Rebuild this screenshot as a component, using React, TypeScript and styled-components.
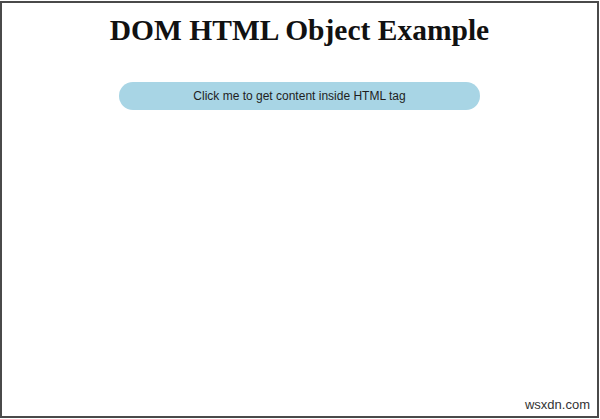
import React from "react";
import styled, { createGlobalStyle } from "styled-components";

const Global = createGlobalStyle`
  html, body { margin: 0; padding: 0; background: #fff; }
  body { width: 600px; height: 419px; overflow: hidden; }
`;

const Frame = styled.div`
  box-sizing: border-box;
  margin: 1px 0 0 0;
  width: 599px;
  height: 417px;
  border: 2px solid #4a4a4a;
  display: flex;
  flex-direction: column;
  align-items: center;
  position: relative;
  background: #fff;
`;

const Title = styled.h1`
  margin: 10px 0 0 0;
  font-family: "Liberation Serif", "Times New Roman", serif;
  font-weight: bold;
  font-size: 29.5px;
  line-height: 34px;
  color: #111;
`;

const Button = styled.button`
  margin-top: 35px;
  width: 361px;
  height: 28px;
  border: none;
  border-radius: 14px;
  background: #a8d5e5;
  font-family: "Liberation Sans", Arial, sans-serif;
  font-size: 12px;
  color: #1e1e1e;
  cursor: pointer;
`;

const Watermark = styled.div`
  position: absolute;
  right: 7px;
  bottom: 4px;
  font-family: "Liberation Sans", Arial, sans-serif;
  font-size: 13px;
  color: #333;
`;

export default function App() {
  return (
    <>
      <Global />
      <Frame>
        <Title>DOM HTML Object Example</Title>
        <Button>Click me to get content inside HTML tag</Button>
        <Watermark>wsxdn.com</Watermark>
      </Frame>
    </>
  );
}
